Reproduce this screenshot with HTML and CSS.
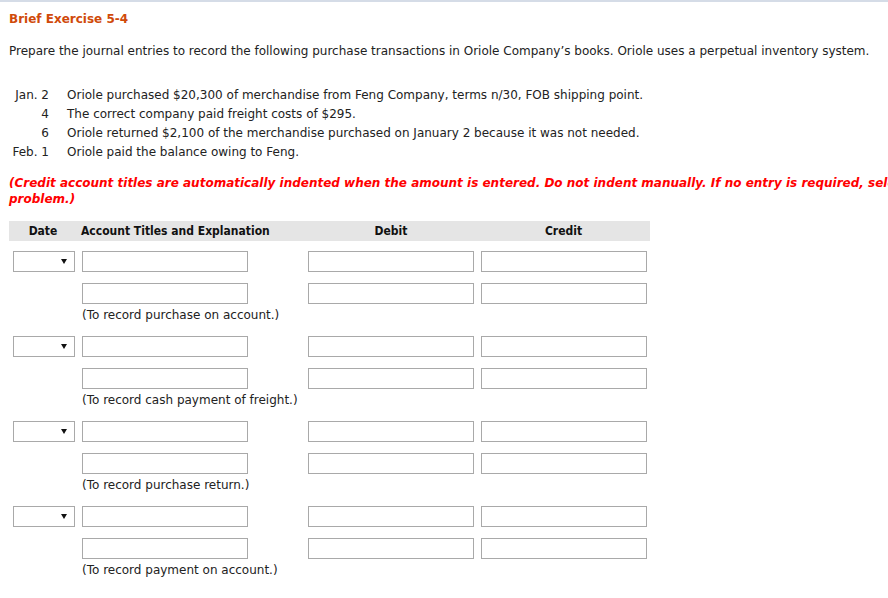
FILE: index.html
```html
<!DOCTYPE html>
<html>
<head>
<meta charset="utf-8">
<link rel="stylesheet" href="styles.css">
</head>
<body>
<div class="topline"></div>
<div class="page">
  <h1 class="title">Brief Exercise 5-4</h1>
  <p class="intro">Prepare the journal entries to record the following purchase transactions in Oriole Company’s books. Oriole uses a perpetual inventory system.</p>

  <div class="trans">
    <div class="td">Jan. 2</div><div class="tt">Oriole purchased $20,300 of merchandise from Feng Company, terms n/30, FOB shipping point.</div>
    <div class="td">4</div><div class="tt">The correct company paid freight costs of $295.</div>
    <div class="td">6</div><div class="tt">Oriole returned $2,100 of the merchandise purchased on January 2 because it was not needed.</div>
    <div class="td">Feb. 1</div><div class="tt">Oriole paid the balance owing to Feng.</div>
  </div>

  <p class="note"><span class="nowrap">(Credit account titles are automatically indented when the amount is entered. Do not indent manually. If no entry is required, select "No Entry" for the account titles and enter 0 for the amounts. Record journal entries in the order presented in the</span><br>problem.)</p>

  <div class="journal">
    <div class="head">
      <div class="h-date">Date</div>
      <div class="h-acct">Account Titles and Explanation</div>
      <div class="h-num">Debit</div>
      <div class="h-num">Credit</div>
    </div>

    <div class="entry">
      <div class="row">
        <div class="c-date"><div class="select"><span class="arrow"></span></div></div>
        <div class="c-acct"><input class="field" type="text"></div>
        <div class="c-dr"><input class="field" type="text"></div>
        <div class="c-cr"><input class="field" type="text"></div>
      </div>
      <div class="row row2">
        <div class="c-date"></div>
        <div class="c-acct"><input class="field" type="text"></div>
        <div class="c-dr"><input class="field" type="text"></div>
        <div class="c-cr"><input class="field" type="text"></div>
      </div>
      <div class="expl">(To record purchase on account.)</div>
    </div>

    <div class="entry">
      <div class="row">
        <div class="c-date"><div class="select"><span class="arrow"></span></div></div>
        <div class="c-acct"><input class="field" type="text"></div>
        <div class="c-dr"><input class="field" type="text"></div>
        <div class="c-cr"><input class="field" type="text"></div>
      </div>
      <div class="row row2">
        <div class="c-date"></div>
        <div class="c-acct"><input class="field" type="text"></div>
        <div class="c-dr"><input class="field" type="text"></div>
        <div class="c-cr"><input class="field" type="text"></div>
      </div>
      <div class="expl">(To record cash payment of freight.)</div>
    </div>

    <div class="entry">
      <div class="row">
        <div class="c-date"><div class="select"><span class="arrow"></span></div></div>
        <div class="c-acct"><input class="field" type="text"></div>
        <div class="c-dr"><input class="field" type="text"></div>
        <div class="c-cr"><input class="field" type="text"></div>
      </div>
      <div class="row row2">
        <div class="c-date"></div>
        <div class="c-acct"><input class="field" type="text"></div>
        <div class="c-dr"><input class="field" type="text"></div>
        <div class="c-cr"><input class="field" type="text"></div>
      </div>
      <div class="expl">(To record purchase return.)</div>
    </div>

    <div class="entry">
      <div class="row">
        <div class="c-date"><div class="select"><span class="arrow"></span></div></div>
        <div class="c-acct"><input class="field" type="text"></div>
        <div class="c-dr"><input class="field" type="text"></div>
        <div class="c-cr"><input class="field" type="text"></div>
      </div>
      <div class="row row2">
        <div class="c-date"></div>
        <div class="c-acct"><input class="field" type="text"></div>
        <div class="c-dr"><input class="field" type="text"></div>
        <div class="c-cr"><input class="field" type="text"></div>
      </div>
      <div class="expl">(To record payment on account.)</div>
    </div>
  </div>
</div>
</body>
</html>
```

FILE: styles.css
```css
html, body {
  margin: 0;
  padding: 0;
  background: #fff;
  overflow: hidden;
}
body {
  font-family: "DejaVu Sans", Verdana, sans-serif;
  font-size: 12px;
  color: #222;
}
.topline {
  height: 2px;
  background: #d5dce7;
}
.page {
  padding: 0 0 0 9px;
}
.title {
  margin: 0;
  padding-top: 9px;
  font-size: 12px;
  line-height: 16px;
  font-weight: bold;
  color: #d04a0a;
}
.intro {
  margin: 16px 0 0 0;
  line-height: 16px;
}
.trans {
  margin-top: 28px;
  display: grid;
  grid-template-columns: 40px auto;
  column-gap: 18px;
  row-gap: 3px;
  line-height: 16px;
}
.td {
  text-align: right;
}
.note {
  margin: 15px 0 0 0;
  color: #f00;
  font-weight: bold;
  font-style: italic;
  line-height: 16px;
  font-size: 12px;
}
.nowrap {
  white-space: nowrap;
}
.journal {
  margin-top: 14px;
  width: 641px;
}
.head, .row {
  display: grid;
  grid-template-columns: 68px 228px 172px 173px;
}
.head {
  height: 20px;
  line-height: 20px;
  background: #e5e5e5;
  font-family: "DejaVu Sans Condensed", "DejaVu Sans", sans-serif;
  font-weight: bold;
  font-size: 12px;
  color: #111;
}
.h-date { text-align: center; }
.h-acct { padding-left: 4px; }
.h-num { text-align: center; }
.entry {
  padding-top: 10px;
}
.entry + .entry {
  padding-top: 13px;
}
.row {
  height: 21px;
}
.row2 {
  margin-top: 11px;
}
.c-date { padding-left: 4px; }
.c-acct { padding-left: 5px; }
.c-dr { padding-left: 3px; }
.c-cr { padding-left: 4px; }
.field {
  box-sizing: border-box;
  display: block;
  width: 166px;
  height: 21px;
  margin: 0;
  padding: 0 3px;
  border: 1px solid #a9a9a9;
  background: #fff;
  outline: none;
}
.select {
  box-sizing: border-box;
  width: 62px;
  height: 21px;
  border: 1px solid #a9a9a9;
  background: #fff;
  display: flex;
  align-items: center;
  justify-content: flex-end;
  padding-right: 7px;
}
.arrow {
  width: 0;
  height: 0;
  border-left: 3px solid transparent;
  border-right: 3px solid transparent;
  border-top: 5px solid #111;
}
.expl {
  margin-top: 3px;
  padding-left: 73px;
  line-height: 16px;
}
```
